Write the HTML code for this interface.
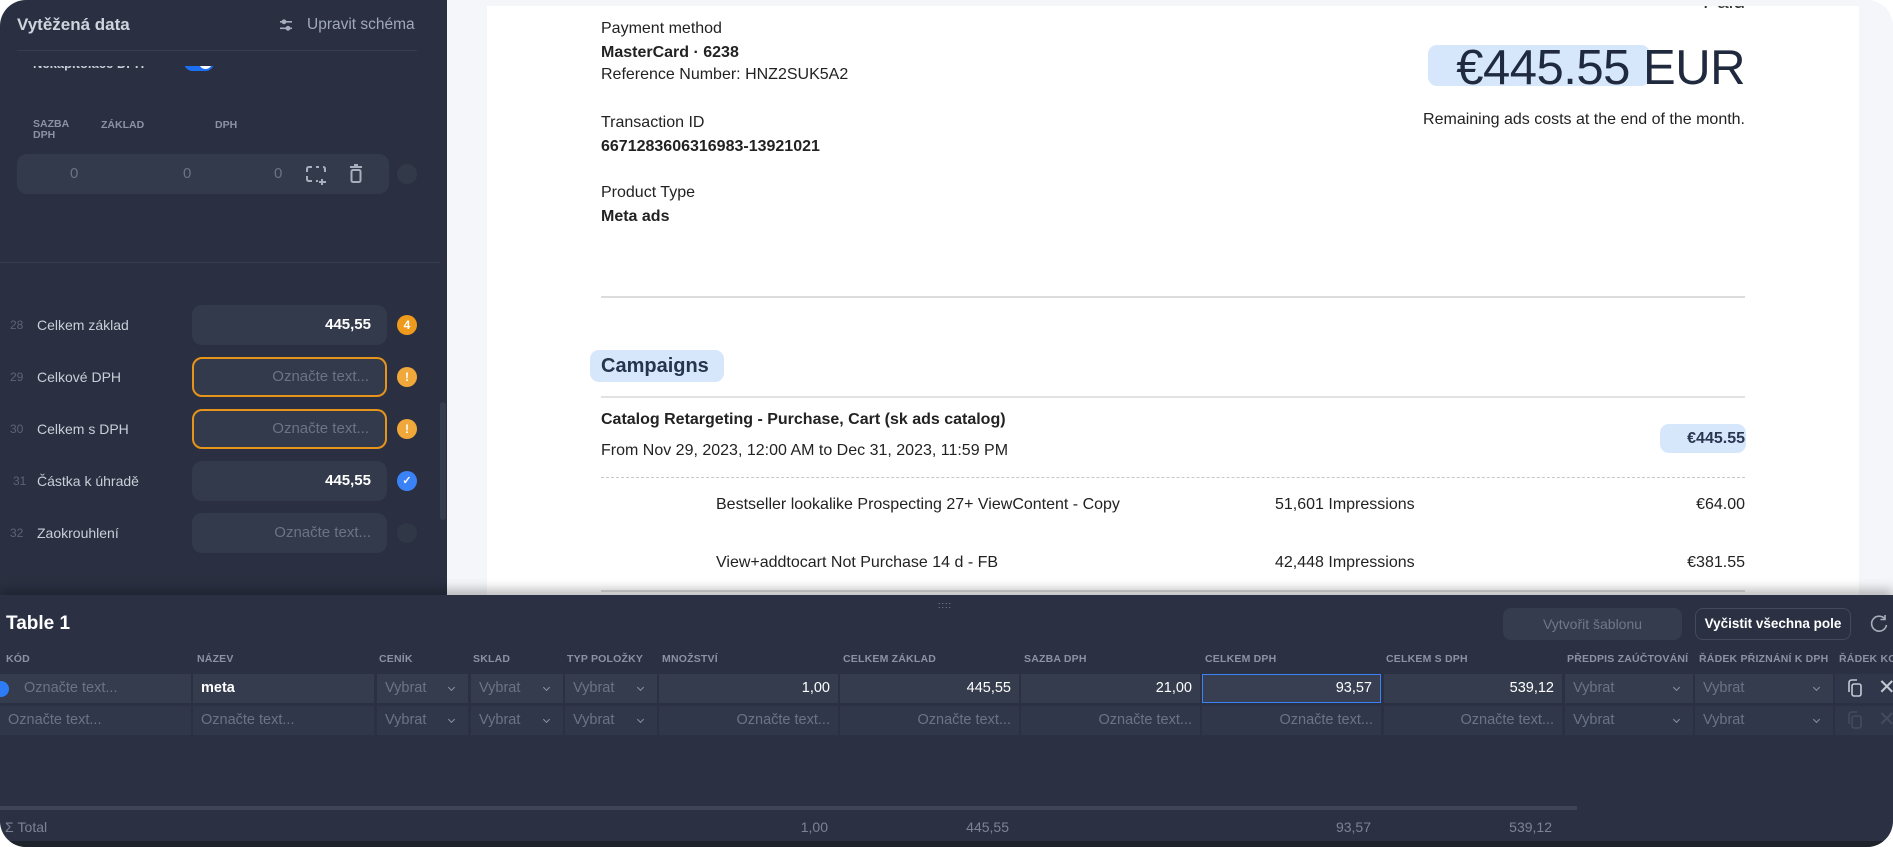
<!DOCTYPE html>
<html><head><meta charset="utf-8">
<style>
*{margin:0;padding:0;box-sizing:border-box}
body{width:1893px;height:847px;background:#fff;overflow:hidden;font-family:"Liberation Sans",sans-serif;position:relative}
.frame{position:absolute;left:0;top:0;width:1893px;height:847px;border-radius:26px;overflow:hidden;background:#f4f6fa}
.a{position:absolute;white-space:nowrap}
.left{position:absolute;left:0;top:0;width:447px;height:600px;background:#2a3041}
.doc{position:absolute;left:487px;top:6px;width:1372px;height:600px;background:#fff;overflow:hidden}
.dt{position:absolute;white-space:nowrap;color:#222;font-size:16px}
.b{font-weight:bold}
.inp{position:absolute;left:192px;width:195px;height:40px;border-radius:10px;background:#333a4b;text-align:right;padding-right:16px;line-height:40px;font-size:15px}
.lab{position:absolute;left:37px;font-size:14px;color:#c9ced8}
.num{position:absolute;left:10px;font-size:12px;color:#5c6476}
.badge{position:absolute;left:397px;width:20px;height:20px;border-radius:50%;color:#fff;font-size:12px;font-weight:bold;text-align:center;line-height:20px}
.bottom{position:absolute;left:0;top:595px;width:1893px;height:252px;background:#2b3142;box-shadow:0 -6px 10px rgba(0,0,0,.25)}
.th{position:absolute;top:58px;font-size:10.5px;font-weight:bold;color:#8a92a4;letter-spacing:.2px;white-space:nowrap}
.c{position:absolute;height:29px;line-height:29px;font-size:14.5px;padding:0 8px;overflow:hidden;white-space:nowrap}
.r1{top:79px;background:#353c4e}
.r2{top:111px;background:#30374a}
.ph{color:#6b7386}
.v{color:#fff;text-align:right}
.sel{color:#6b7386}
.sel i{position:absolute;right:14px;top:11px;width:5px;height:5px;border-right:1.5px solid #8a92a4;border-bottom:1.5px solid #8a92a4;transform:rotate(45deg)}
.t{position:absolute;top:224px;font-size:14px;color:#7b8395}
</style></head><body>
<div class="frame">
<div class="left">
  <div class="a" style="left:17px;top:15px;font-size:17px;font-weight:bold;color:#cfd4dd">Vytěžená data</div>
  <svg class="a" style="left:279px;top:18px" width="14" height="14" viewBox="0 0 14 14"><g fill="#a7afbd"><rect x="1" y="3" width="12" height="1.6"/><rect x="1" y="9.5" width="12" height="1.6"/><circle cx="5" cy="3.8" r="2.4"/><circle cx="9" cy="10.3" r="2.4"/></g></svg>
  <div class="a" style="left:307px;top:16px;font-size:15.5px;color:#a0a9b9">Upravit schéma</div>
  <div class="a" style="left:17px;top:50px;width:400px;height:1px;background:#363d4d"></div>
  <div style="position:absolute;left:0;top:66px;width:447px;height:10px;overflow:hidden">
    <div class="a" style="left:33px;top:-10px;font-size:13px;font-weight:bold;color:#c9ced8">Nekapitolace DPH</div>
    <div class="a" style="left:184px;top:-12px;width:30px;height:17px;border-radius:9px;background:#1d6ff2"></div>
    <div class="a" style="left:199px;top:-10px;width:13px;height:13px;border-radius:50%;background:#fff"></div>
  </div>
  <div class="a" style="left:33px;top:119px;font-size:10.5px;font-weight:bold;color:#8a92a4;line-height:11px">SAZBA<br>DPH</div>
  <div class="a" style="left:101px;top:119px;font-size:10.5px;font-weight:bold;color:#8a92a4">ZÁKLAD</div>
  <div class="a" style="left:215px;top:119px;font-size:10.5px;font-weight:bold;color:#8a92a4">DPH</div>
  <div class="a" style="left:17px;top:154px;width:372px;height:40px;border-radius:10px;background:#333a4b"></div>
  <div class="a" style="left:70px;top:165px;font-size:15px;color:#6b7386">0</div>
  <div class="a" style="left:183px;top:165px;font-size:15px;color:#6b7386">0</div>
  <div class="a" style="left:274px;top:165px;font-size:15px;color:#6b7386">0</div>
  <svg class="a" style="left:306px;top:166px" width="24" height="20" viewBox="0 0 24 20"><g stroke="#a7afbd" stroke-width="2" fill="none"><path d="M1 6V3Q1 1 3 1H6M10 1H13M17 1Q19 1 19 3V6M1 10V13Q1 15 3 15H6M10 15H12M16 13V19M13 16H20"/></g></svg>
  <svg class="a" style="left:349px;top:164px" width="14" height="20" viewBox="0 0 14 20"><g stroke="#a7afbd" stroke-width="2" fill="none"><path d="M1 3H13M5 1H9"/><rect x="2.5" y="6" width="9" height="12" rx="1.5"/></g></svg>
  <div class="a" style="left:397px;top:164px;width:20px;height:20px;border-radius:50%;background:#323949"></div>
  <div class="a" style="left:0;top:262px;width:440px;height:1px;background:#363d4d"></div>

  <div class="num" style="top:318px">28</div><div class="lab" style="top:317px">Celkem základ</div>
  <div class="inp" style="top:305px;color:#fff;font-weight:bold">445,55</div>
  <div class="badge" style="top:315px;background:#ee9a1c">4</div>

  <div class="num" style="top:370px">29</div><div class="lab" style="top:369px">Celkové DPH</div>
  <div class="inp" style="top:357px;border:2px solid #e6941a;line-height:36px;color:#6b7386">Označte text...</div>
  <div class="badge" style="top:367px;background:#f0a83a">!</div>

  <div class="num" style="top:422px">30</div><div class="lab" style="top:421px">Celkem s DPH</div>
  <div class="inp" style="top:409px;border:2px solid #e6941a;line-height:36px;color:#6b7386">Označte text...</div>
  <div class="badge" style="top:419px;background:#f0a83a">!</div>

  <div class="num" style="top:474px;left:13px">31</div><div class="lab" style="top:473px">Částka k úhradě</div>
  <div class="inp" style="top:461px;color:#fff;font-weight:bold">445,55</div>
  <div class="badge" style="top:471px;background:#3b82f6;font-size:11px">✓</div>

  <div class="num" style="top:526px">32</div><div class="lab" style="top:525px">Zaokrouhlení</div>
  <div class="inp" style="top:513px;color:#6b7386">Označte text...</div>
  <div class="badge" style="top:523px;background:#303747"></div>

  <div class="a" style="left:440px;top:402px;width:6px;height:118px;border-radius:3px;background:#363d4d"></div>
</div>

<div class="doc">
  <div class="dt" style="right:114px;top:-16px;font-size:21px;color:#333">Paid</div>
  <div class="dt" style="left:114px;top:14px">Payment method</div>
  <div class="dt b" style="left:114px;top:38px">MasterCard · 6238</div>
  <div class="dt" style="left:114px;top:60px">Reference Number: HNZ2SUK5A2</div>
  <div class="dt" style="left:114px;top:108px">Transaction ID</div>
  <div class="dt b" style="left:114px;top:132px">6671283606316983-13921021</div>
  <div class="dt" style="left:114px;top:178px">Product Type</div>
  <div class="dt b" style="left:114px;top:202px">Meta ads</div>

  <div class="a" style="left:941px;top:39px;width:222px;height:41px;border-radius:9px;background:#d6e6fb"></div>
  <div class="dt" style="right:114px;top:34px;font-size:49px;color:#1f2a3f;letter-spacing:-0.5px">€445.55 EUR</div>
  <div class="dt" style="right:114px;top:105px;font-size:16px">Remaining ads costs at the end of the month.</div>

  <div class="a" style="left:114px;top:290px;width:1144px;height:2px;background:#dcdcdc"></div>
  <div class="a" style="left:103px;top:344px;width:134px;height:32px;border-radius:9px;background:#d6e6fb"></div>
  <div class="dt b" style="left:114px;top:349px;font-size:20px;color:#26344d">Campaigns</div>
  <div class="a" style="left:114px;top:390px;width:1144px;height:2px;background:#e2e2e2"></div>
  <div class="dt b" style="left:114px;top:405px">Catalog Retargeting - Purchase, Cart (sk ads catalog)</div>
  <div class="dt" style="left:114px;top:436px">From Nov 29, 2023, 12:00 AM to Dec 31, 2023, 11:59 PM</div>
  <div class="a" style="left:1173px;top:418px;width:86px;height:29px;border-radius:9px;background:#d6e6fb"></div>
  <div class="dt b" style="right:114px;top:424px;color:#2a3550">€445.55</div>
  <div class="a" style="left:114px;top:471px;width:1144px;height:0;border-top:1px dashed #c8c8c8"></div>
  <div class="dt" style="left:229px;top:490px">Bestseller lookalike Prospecting 27+ ViewContent - Copy</div>
  <div class="dt" style="left:788px;top:490px">51,601 Impressions</div>
  <div class="dt" style="right:114px;top:490px">€64.00</div>
  <div class="dt" style="left:229px;top:548px">View+addtocart Not Purchase 14 d - FB</div>
  <div class="dt" style="left:788px;top:548px">42,448 Impressions</div>
  <div class="dt" style="right:114px;top:548px">€381.55</div>
  <div class="a" style="left:114px;top:584px;width:1144px;height:2px;background:#dcdcdc"></div>
</div>

<div class="bottom">
  <div class="a" style="left:938px;top:5px;font-size:9px;color:#8a92a4;letter-spacing:1px">::::</div>
  <div class="a" style="left:6px;top:18px;font-size:19px;font-weight:bold;color:#fff">Table 1</div>
  <div class="a" style="left:1503px;top:13px;width:179px;height:32px;border-radius:8px;background:#353c4d;color:#6f7789;font-size:14px;text-align:center;line-height:32px">Vytvořit šablonu</div>
  <div class="a" style="left:1695px;top:13px;width:156px;height:32px;border-radius:8px;border:1px solid #434a5b;color:#fff;font-size:13.5px;font-weight:bold;text-align:center;line-height:30px">Vyčistit všechna pole</div>
  <svg class="a" style="left:1869px;top:19px" width="20" height="20" viewBox="0 0 20 20"><path d="M16 5A7.5 7.5 0 1 0 17.5 11" stroke="#a7afbd" stroke-width="1.6" fill="none"/><path d="M16 1V5.5H11.5" stroke="#a7afbd" stroke-width="1.6" fill="none"/></svg>

  <div class="th" style="left:6px">KÓD</div>
  <div class="th" style="left:197px">NÁZEV</div>
  <div class="th" style="left:379px">CENÍK</div>
  <div class="th" style="left:473px">SKLAD</div>
  <div class="th" style="left:567px">TYP POLOŽKY</div>
  <div class="th" style="left:662px">MNOŽSTVÍ</div>
  <div class="th" style="left:843px">CELKEM ZÁKLAD</div>
  <div class="th" style="left:1024px">SAZBA DPH</div>
  <div class="th" style="left:1205px">CELKEM DPH</div>
  <div class="th" style="left:1386px">CELKEM S DPH</div>
  <div class="th" style="left:1567px">PŘEDPIS ZAÚČTOVÁNÍ</div>
  <div class="th" style="left:1699px">ŘÁDEK PŘIZNÁNÍ K DPH</div>
  <div class="th" style="left:1839px">ŘÁDEK KO</div>

  <div class="c r1 ph" style="left:0;width:191px;padding-left:24px">Označte text...</div>
  <div class="a" style="left:-7px;top:86px;width:16px;height:16px;border-radius:50%;background:#2d7cf6"></div>
  <div class="c r1" style="left:193px;width:181px;color:#fff;font-weight:bold">meta</div>
  <div class="c r1 sel" style="left:377px;width:91px">Vybrat<i></i></div>
  <div class="c r1 sel" style="left:471px;width:92px">Vybrat<i></i></div>
  <div class="c r1 sel" style="left:565px;width:92px">Vybrat<i></i></div>
  <div class="c r1 v" style="left:659px;width:179px">1,00</div>
  <div class="c r1 v" style="left:840px;width:179px">445,55</div>
  <div class="c r1 v" style="left:1021px;width:179px">21,00</div>
  <div class="c r1 v" style="left:1202px;width:179px;border:1px solid #3b82f6;background:#383f53;line-height:27px">93,57</div>
  <div class="c r1 v" style="left:1384px;width:178px">539,12</div>
  <div class="c r1 sel" style="left:1565px;width:128px">Vybrat<i></i></div>
  <div class="c r1 sel" style="left:1695px;width:138px">Vybrat<i></i></div>
  <div class="c r1" style="left:1835px;width:58px;background:#30374a"></div>
  <svg class="a" style="left:1847px;top:84px" width="16" height="19" viewBox="0 0 16 19"><g stroke="#c4cad4" stroke-width="1.6" fill="none"><rect x="5" y="5" width="9" height="12" rx="2"/><path d="M2 13V4Q2 1 5 1H10"/></g></svg>
  <div class="a" style="left:1878px;top:80px;font-size:21px;color:#c4cad4">✕</div>

  <div class="c r2 ph" style="left:0;width:191px">Označte text...</div>
  <div class="c r2 ph" style="left:193px;width:181px">Označte text...</div>
  <div class="c r2 sel" style="left:377px;width:91px">Vybrat<i></i></div>
  <div class="c r2 sel" style="left:471px;width:92px">Vybrat<i></i></div>
  <div class="c r2 sel" style="left:565px;width:92px">Vybrat<i></i></div>
  <div class="c r2 ph" style="left:659px;width:179px;text-align:right">Označte text...</div>
  <div class="c r2 ph" style="left:840px;width:179px;text-align:right">Označte text...</div>
  <div class="c r2 ph" style="left:1021px;width:179px;text-align:right">Označte text...</div>
  <div class="c r2 ph" style="left:1202px;width:179px;text-align:right">Označte text...</div>
  <div class="c r2 ph" style="left:1384px;width:178px;text-align:right">Označte text...</div>
  <div class="c r2 sel" style="left:1565px;width:128px">Vybrat<i></i></div>
  <div class="c r2 sel" style="left:1695px;width:138px">Vybrat<i></i></div>
  <div class="c r2" style="left:1835px;width:58px"></div>
  <svg class="a" style="left:1847px;top:116px" width="16" height="19" viewBox="0 0 16 19"><g stroke="#444b5c" stroke-width="1.6" fill="none"><rect x="5" y="5" width="9" height="12" rx="2"/><path d="M2 13V4Q2 1 5 1H10"/></g></svg>
  <div class="a" style="left:1878px;top:112px;font-size:21px;color:#444b5c">✕</div>

  <div class="a" style="left:0;top:211px;width:1577px;height:4px;background:#3e4556"></div>
  <div class="t" style="left:5px">Σ Total</div>
  <div class="t" style="right:1065px">1,00</div>
  <div class="t" style="right:884px">445,55</div>
  <div class="t" style="right:522px">93,57</div>
  <div class="t" style="right:341px">539,12</div>
  <div class="a" style="left:0;top:246px;width:1893px;height:6px;background:#1e222b"></div>
</div>
</div>
</body></html>
